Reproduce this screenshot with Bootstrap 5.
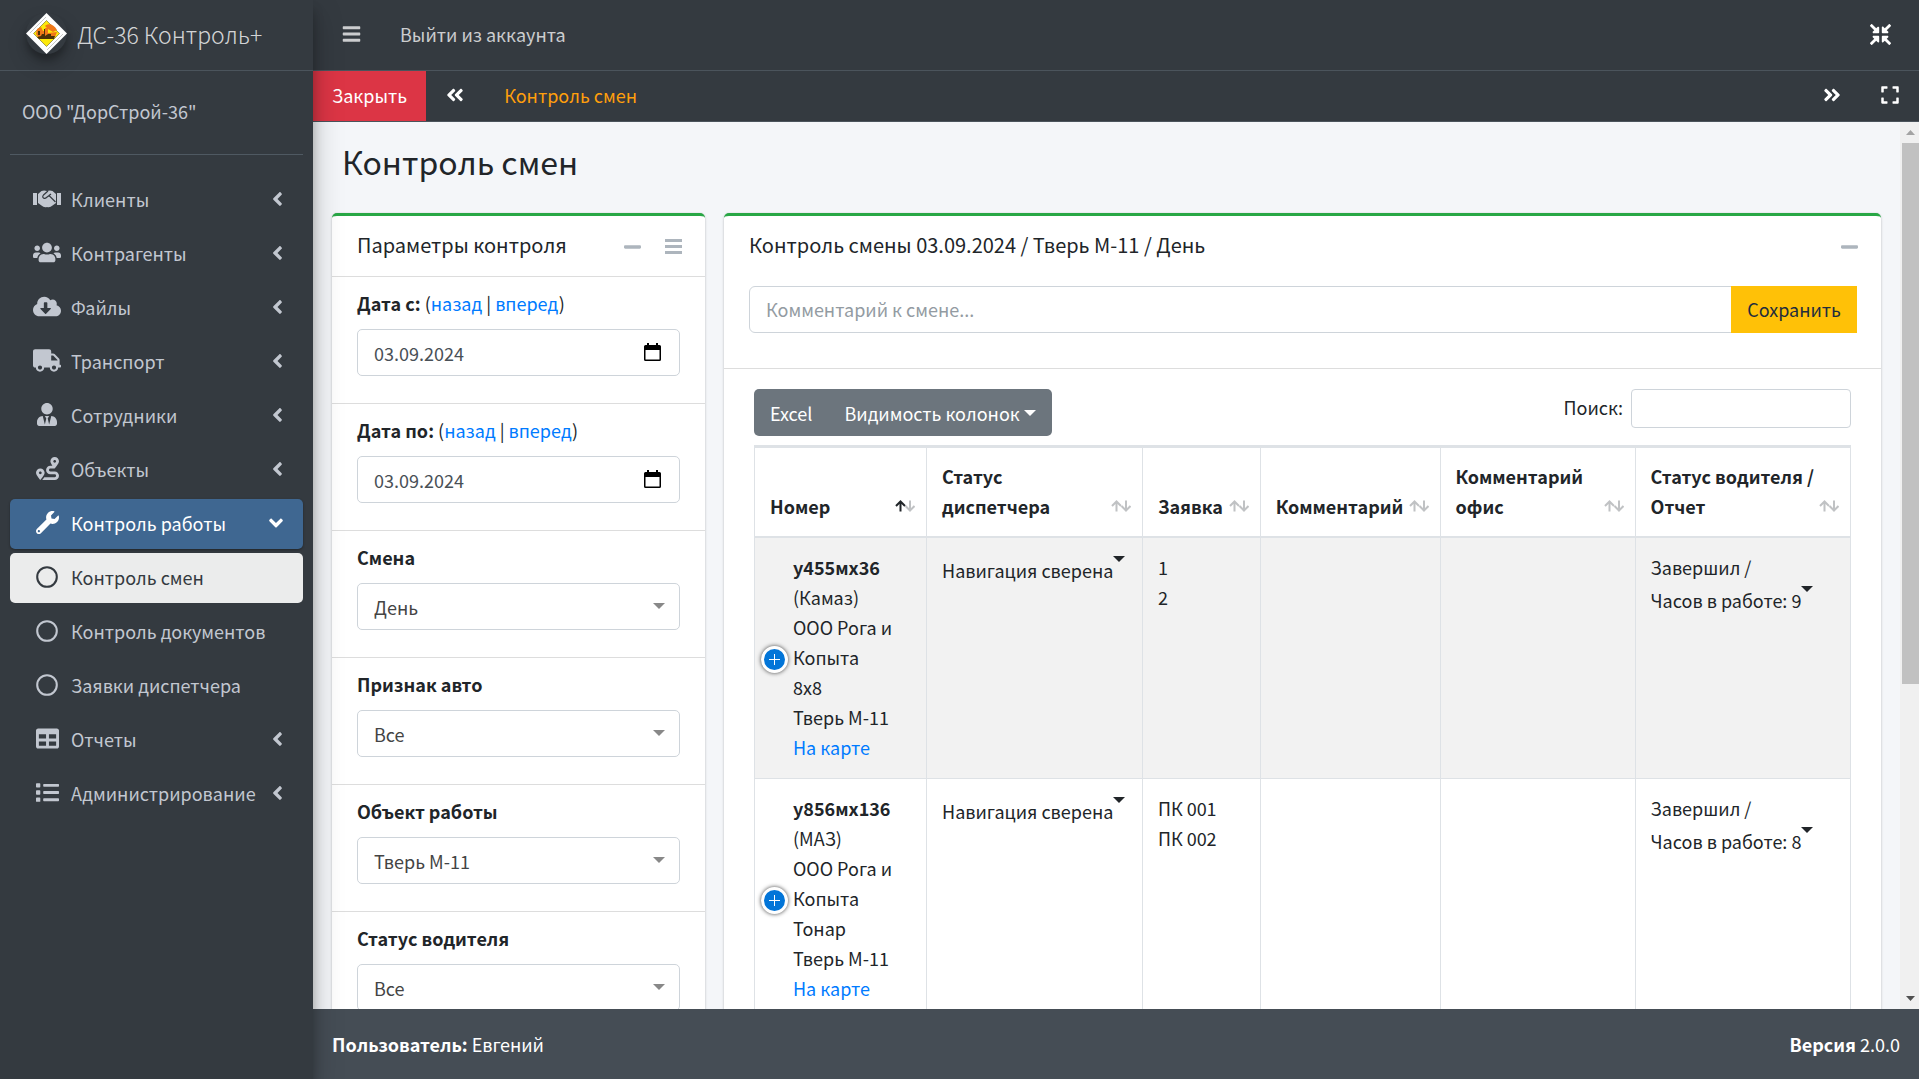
<!DOCTYPE html>
<html lang="ru">
<head>
<meta charset="utf-8">
<meta name="viewport" content="width=device-width, initial-scale=1">
<title>ДС-36 Контроль+</title>
<link rel="stylesheet" href="https://cdn.jsdelivr.net/npm/bootstrap@5.3.0/dist/css/bootstrap.min.css">
<script src="https://cdn.jsdelivr.net/npm/bootstrap@5.3.0/dist/js/bootstrap.bundle.min.js"></script>
<style>
  :root { --ink: #212529; --dark: #343a40; --line: #dee2e6; --side: #c2c7d0; }
  body { font-family: "Noto Sans CJK SC", "Noto Sans", sans-serif; font-size: 18px; line-height: 30px; color: var(--ink); background: #f4f6f9; }
  a { text-decoration: none; color: #007bff; }
  svg { fill: currentColor; display: block; flex: none; }
  .form-control, .form-select, .btn { font-size: 18px; line-height: 30px; }

  /* sidebar */
  .sidebar { width: 313px; background: var(--dark); color: var(--side); z-index: 5; box-shadow: 0 14px 28px rgba(0,0,0,.25), 0 10px 10px rgba(0,0,0,.22); }
  .brand { height: 71px; padding: 0 26px 3px; gap: 10px; border-bottom: 1px solid #4b545c; color: rgba(255,255,255,.8); font-size: 23px; font-weight: 300; }
  .brand-logo { border-radius: 50%; box-shadow: 0 10px 20px rgba(0,0,0,.19), 0 6px 6px rgba(0,0,0,.23); }
  .org { height: 84px; margin: 0 10px 20px; padding: 0 12px 3px; border-bottom: 1px solid #4f5962; }
  .org a { color: var(--side); }
  .side-nav { padding: 0 10px; gap: 4px; }
  .side-nav .nav-link { height: 50px; display: flex; align-items: center; padding: 0 20px; color: var(--side); border-radius: 5px; }
  .side-nav .nav-link > span { flex: 1; white-space: nowrap; margin-bottom: 2px; }
  .side-nav .ico { width: 34px; margin: 0 7px 3px 0; display: flex; justify-content: center; }
  .side-nav .arr { margin-bottom: 3px; }
  .side-nav .nav-link.opened { background: #3f6791; color: #fff; box-shadow: 0 1px 3px rgba(0,0,0,.12), 0 1px 2px rgba(0,0,0,.24); }
  .side-nav .nav-link.current { background: #ebecec; color: var(--dark); }

  /* top bars */
  .topbar { height: 71px; background: var(--dark); border-bottom: 1px solid #4b545c; padding: 0 28px 2px 29px; }
  .topbar a { color: rgba(255,255,255,.75); }
  .topbar .logout { margin-left: 39px; }
  .tabbar { height: 51px; background: var(--dark); border-bottom: 1px solid #4b545c; }
  .tabbar a { color: #fff; padding-bottom: 2px; }
  .tabbar .close-tab { background: #dc3545; padding: 0 19px 2px; }
  .tabbar .tab-title { color: #ff9f0c; }

  /* content */
  .pane { padding: 20px 19px 0; overflow: hidden; }
  .page-title { font-size: 32px; line-height: 38px; padding: 0 10px; margin-bottom: 33px; font-weight: 400; }
  .panels { gap: 19px; }
  .panel { background: #fff; border-top: 3px solid #28a745; border-radius: 5px; box-shadow: 0 0 1px rgba(0,0,0,.125), 0 1px 3px rgba(0,0,0,.2); }
  .panel-params { width: 373px; }
  .panel-title { font-size: 20px; line-height: 30px; font-weight: 400; margin: 0; padding-bottom: 2px; }
  .panel-head { height: 60px; padding: 0 23px 0 25px; }
  .tool { color: #adb5bd; border: 0; background: none; padding: 1px 0 0; }
  .param { border-top: 1px solid rgba(0,0,0,.135); padding: 11px 25px 27px; }
  .param .lbl { margin-bottom: 11px; }
  .param .form-control, .param .form-select { height: 47px; border-color: #ced4da; border-radius: 5px; color: #495057; padding: 0 16px; box-shadow: none; }
  .param .form-select { background: #fff; color: #444; appearance: none; }
  .field { position: relative; }
  .field svg { position: absolute; right: 19px; top: 14px; color: #000; pointer-events: none; }
  .field .caret-s { right: 15px; top: 20px; color: #888; }

  .comment-row { padding: 10px 24px 35px 25px; border-bottom: 1px solid rgba(0,0,0,.135); }
  .comment-row .form-control { height: 47px; border-color: #ced4da; padding: 0 16px 2px; }
  .comment-row .form-control::placeholder { color: #939ba2; }
  .comment-row .btn { background: #ffc107; color: #1f2d3d; border: 0; border-radius: 0; padding: 0 16px 2px; margin: 0; }
  .grid-area { padding: 20px 30px; }
  .grid-area .btn-group { background: #6c757d; border-radius: 5px; }
  .grid-area .btn-group .btn { color: #fff; border: 0; height: 47px; padding: 0 16px; }
  .grid-area .btn-group .btn + .btn { margin-left: 0; }
  .search-box { width: 220px; height: 39px; border-color: #ced4da; border-radius: 4px; }
  .shifts { border-collapse: separate; border-spacing: 0; border: 1px solid var(--line); border-width: 1px 0 0 1px; margin-top: 9px; width: 100%; table-layout: fixed; color: var(--ink); }
  .shifts th, .shifts td { border: 0 solid var(--line); border-width: 0 1px 1px 0; padding: 14px 15px 16px; vertical-align: top; }
  .shifts th { border-width: 2px 1px 2px 0; vertical-align: bottom; padding: 13px 11px 15px 15px; font-weight: 700; }
  .shifts th > div { display: flex; justify-content: space-between; align-items: flex-end; }
  .shifts th svg { margin-bottom: 9px; color: #c0c2c4; }
  .shifts tbody tr:nth-child(odd) td { background: #f2f2f2; }
  .shifts td:first-child { padding-left: 38px; position: relative; }
  .row-open { position: absolute; left: 6px; top: 50%; margin-top: -12px; width: 27px; height: 27px; border: 3px solid #fff; border-radius: 50%; background: #0275d8; color: #fff; padding: 0; display: flex; align-items: center; justify-content: center; box-shadow: 0 0 4px #444; }
  .status { display: flex; color: var(--ink); border: 0; background: none; padding: 3px 0 0; text-align: left; white-space: nowrap; }
  .status svg { margin-top: 1px; }

  .page-foot { height: 70px; background: #454d55; color: #fff; padding: 0 19px; }

  /* scroll strip */
  .strip { width: 19px; background: #f0f0f0; padding-left: 2px; }
  .strip-end { height: 21px; }
  .strip-thumb { background: #c1c1c1; height: 64%; }
</style>
</head>
<body>
<svg width="0" height="0" class="position-absolute" aria-hidden="true">
  <defs>
    <symbol id="i-bars" viewBox="0 0 448 512"><path d="M16 132h416c9 0 16-7 16-16V76c0-9-7-16-16-16H16C7 60 0 67 0 76v40c0 9 7 16 16 16zm0 160h416c9 0 16-7 16-16v-40c0-9-7-16-16-16H16c-9 0-16 7-16 16v40c0 9 7 16 16 16zm0 160h416c9 0 16-7 16-16v-40c0-9-7-16-16-16H16c-9 0-16 7-16 16v40c0 9 7 16 16 16z"/></symbol>
    <symbol id="i-left" viewBox="0 0 256 512"><path d="M31.700 239l136-136c9.400-9.400 24.600-9.400 33.900 0l22.600 22.600c9.400 9.400 9.400 24.600 0 33.900L127.900 256l96.400 96.400c9.400 9.400 9.400 24.600 0 33.900L201.700 409c-9.400 9.400-24.600 9.400-33.900 0l-136-136c-9.500-9.400-9.500-24.600-.1-34z"/></symbol>
    <symbol id="i-dleft" viewBox="0 0 448 512"><path d="M223.700 239l136-136c9.400-9.400 24.600-9.400 33.900 0l22.600 22.600c9.400 9.400 9.400 24.600 0 33.900L319.900 256l96.400 96.400c9.400 9.400 9.400 24.600 0 33.900L393.700 409c-9.400 9.400-24.600 9.400-33.900 0l-136-136c-9.500-9.400-9.500-24.600-.1-34zm-192 34l136 136c9.400 9.400 24.600 9.400 33.900 0l22.600-22.600c9.400-9.400 9.400-24.600 0-33.900L127.900 256l96.400-96.400c9.400-9.400 9.400-24.600 0-33.900L201.700 103c-9.400-9.400-24.600-9.400-33.900 0l-136 136c-9.500 9.400-9.500 24.600-.1 34z"/></symbol>
    <symbol id="i-dright" viewBox="0 0 448 512"><g transform="matrix(-1 0 0 1 448 0)"><use href="#i-dleft" width="448" height="512"/></g></symbol>
    <symbol id="i-minus" viewBox="0 0 448 512"><path d="M416 208H32c-17.670 0-32 14.330-32 32v32c0 17.670 14.330 32 32 32h384c17.670 0 32-14.330 32-32v-32c0-17.670-14.330-32-32-32z"/></symbol>
    <symbol id="i-expand" viewBox="0 0 448 512"><path d="M0 180V56c0-13.300 10.700-24 24-24h124c6.600 0 12 5.400 12 12v40c0 6.600-5.400 12-12 12H64v84c0 6.600-5.400 12-12 12H12c-6.600 0-12-5.400-12-12zM288 44v40c0 6.600 5.400 12 12 12h84v84c0 6.600 5.400 12 12 12h40c6.600 0 12-5.400 12-12V56c0-13.300-10.700-24-24-24H300c-6.600 0-12 5.400-12 12zm148 276h-40c-6.600 0-12 5.400-12 12v84h-84c-6.600 0-12 5.400-12 12v40c0 6.600 5.400 12 12 12h124c13.300 0 24-10.700 24-24V332c0-6.600-5.400-12-12-12zM160 468v-40c0-6.600-5.400-12-12-12H64v-84c0-6.600-5.400-12-12-12H12c-6.600 0-12 5.400-12 12v124c0 13.300 10.700 24 24 24h124c6.600 0 12-5.400 12-12z"/></symbol>
    <symbol id="i-compress" viewBox="0 0 512 512"><path d="M200 288H88c-21.400 0-32.100 25.800-17 41l32.900 31-99.200 99.300c-6.200 6.200-6.200 16.400 0 22.600l25.400 25.400c6.200 6.200 16.400 6.200 22.600 0L152 408l31.100 33c15.100 15.100 40.900 4.400 40.900-17V312c0-13.300-10.700-24-24-24zm112-64h112c21.400 0 32.100-25.900 17-41l-33-31 99.300-99.300c6.200-6.200 6.200-16.400 0-22.600L481.900 4.700c-6.200-6.200-16.400-6.200-22.600 0L360 104l-31.100-33C313.800 55.900 288 66.600 288 88v112c0 13.300 10.700 24 24 24zm96 136l33-31.100c15.100-15.100 4.400-40.900-17-40.900H312c-13.300 0-24 10.700-24 24v112c0 21.400 25.900 32.100 41 17l31-32.900 99.300 99.300c6.200 6.200 16.400 6.200 22.600 0l25.400-25.400c6.200-6.200 6.200-16.400 0-22.600L408 360zM183 71.100L152 104 52.700 4.700c-6.200-6.200-16.400-6.200-22.600 0L4.700 30.100c-6.200 6.200-6.200 16.400 0 22.600L104 152l-33 31.100C55.900 198.200 66.600 224 88 224h112c13.300 0 24-10.700 24-24V88c0-21.300-25.900-32-41-16.900z"/></symbol>
    <symbol id="i-ring" viewBox="0 0 512 512"><circle cx="256" cy="256" r="228" fill="none" stroke="currentColor" stroke-width="48"/></symbol>
    <symbol id="i-cal" viewBox="0 0 17 18"><path d="M3 0h2v2h7V0h2v2h1.500A1.500 1.500 0 0 1 17 3.500v13a1.500 1.500 0 0 1-1.500 1.500h-14A1.500 1.500 0 0 1 0 16.500v-13A1.500 1.500 0 0 1 1.500 2H3zM1.500 7v9.500h14V7z"/></symbol>
    <symbol id="i-caret" viewBox="0 0 12 6"><path d="M0 0h12L6 6z"/></symbol>
    <symbol id="i-sort" viewBox="0 0 20 12"><path d="M15 .5v10M10.500 6l4.500 4.500L19.500 6" fill="none" stroke="currentColor" stroke-width="2"/><path d="M5.500 11.500v-10M1 6l4.500-4.500L10 6" fill="none" stroke="var(--up, currentColor)" stroke-width="2"/></symbol>
  </defs>
</svg>

<div class="d-flex vh-100 overflow-hidden">
  <aside class="sidebar flex-shrink-0 position-relative">
    <a href="#" class="brand d-flex align-items-center">
      <svg class="brand-logo" width="41" height="41" viewBox="0 0 41 41">
        <path fill="#fff" d="M20.500 0L41 20.500 20.500 41 0 20.500z"/>
        <path fill="none" stroke="#b9b9b9" stroke-width=".8" d="M4 20L20 4M21 37l16-16"/>
        <path fill="#fce80a" stroke="#6b6420" stroke-width=".6" d="M20.500 7.500l13 13-13 13-13-13z"/>
        <path fill="#f07818" d="M19 13c3-3 9-2 12 4l-4 2-5-3zM10 21l1-5 4-2 2 4h2v-3h3v5l9-1-2 5H12z"/>
        <path fill="#4b3208" d="M11 24l4-1 1-2h3v2l3-2h3v2h4l-1 3H13zM12 18h2v4h-2zM18 16h1v5h-1z"/>
      </svg>
      <span>ДС-36 Контроль+</span>
    </a>
    <div class="org d-flex align-items-center"><a href="#">ООО "ДорСтрой-36"</a></div>
    <nav class="side-nav nav flex-column">
      <a class="nav-link" href="#"><i class="ico"><svg width="28" height="20" viewBox="0 0 28 20"><path d="M0 4h4v12H0zM24 4h4v12h-4z"/><path d="M5 5l3.500-3Q11 1 14 2q3-1 5.500 0L23 5v9l-3.500 2.500Q17 19 14 18q-3 1-5.500-1.500L5 14z"/><path fill="none" stroke="#343a40" stroke-width="1.200" d="M15 2l-4.500 4Q9 8 10.500 9q1.500 1 3-.5L16 6.500l6.500 6.500M16 6.500l2-1.500"/></svg></i><span>Клиенты</span><svg class="arr" width="11" height="22"><use href="#i-left"/></svg></a>
      <a class="nav-link" href="#"><i class="ico"><svg width="28" height="23" viewBox="0 0 640 512"><path d="M96 224c35.300 0 64-28.700 64-64s-28.700-64-64-64-64 28.700-64 64 28.700 64 64 64zm448 0c35.300 0 64-28.700 64-64s-28.700-64-64-64-64 28.700-64 64 28.700 64 64 64zm32 32h-64c-17.600 0-33.500 7.100-45.100 18.600 40.300 22.100 68.900 62 75.100 109.400h66c17.700 0 32-14.300 32-32v-32c0-35.300-28.700-64-64-64zm-256 0c61.900 0 112-50.100 112-112S381.900 32 320 32 208 82.100 208 144s50.100 112 112 112zm76.800 32h-8.300c-20.800 10-43.900 16-68.500 16s-47.600-6-68.500-16h-8.300C179.600 288 128 339.600 128 403.200V432c0 26.500 21.500 48 48 48h288c26.500 0 48-21.500 48-48v-28.800c0-63.600-51.600-115.200-115.200-115.200zm-223.700-13.400C161.500 263.100 145.600 256 128 256H64c-35.300 0-64 28.700-64 64v32c0 17.700 14.300 32 32 32h65.900c6.300-47.400 34.900-87.300 75.200-109.400z"/></svg></i><span>Контрагенты</span><svg class="arr" width="11" height="22"><use href="#i-left"/></svg></a>
      <a class="nav-link" href="#"><i class="ico"><svg width="28" height="23" viewBox="0 0 640 512"><path d="M537.600 226.600c4.100-10.700 6.400-22.400 6.400-34.600 0-53-43-96-96-96-19.700 0-38.100 6-53.300 16.200C367 64.200 315.300 32 256 32c-88.400 0-160 71.600-160 160 0 2.700.1 5.400.2 8.100C40.200 219.800 0 273.200 0 336c0 79.500 64.500 144 144 144h368c70.700 0 128-57.300 128-128 0-61.900-44-113.600-102.400-125.400zm-132.900 88.700L299.300 420.700c-6.200 6.200-16.400 6.200-22.600 0L171.300 315.300c-10.100-10.100-2.900-27.300 11.300-27.300H248V176c0-8.800 7.200-16 16-16h48c8.800 0 16 7.200 16 16v112h65.400c14.200 0 21.400 17.200 11.300 27.300z"/></svg></i><span>Файлы</span><svg class="arr" width="11" height="22"><use href="#i-left"/></svg></a>
      <a class="nav-link" href="#"><i class="ico"><svg width="28" height="23" viewBox="0 0 640 512"><path d="M624 352h-16V243.900c0-12.700-5.100-24.900-14.100-33.900L494 110.100c-9-9-21.200-14.100-33.900-14.100H416V48c0-26.500-21.500-48-48-48H48C21.500 0 0 21.500 0 48v320c0 26.500 21.500 48 48 48h16c0 53 43 96 96 96s96-43 96-96h128c0 53 43 96 96 96s96-43 96-96h48c8.800 0 16-7.200 16-16v-32c0-8.800-7.200-16-16-16zM160 464c-26.500 0-48-21.500-48-48s21.500-48 48-48 48 21.500 48 48-21.500 48-48 48zm320 0c-26.500 0-48-21.500-48-48s21.500-48 48-48 48 21.500 48 48-21.500 48-48 48zm80-208H416V144h44.100l99.900 99.900V256z"/></svg></i><span>Транспорт</span><svg class="arr" width="11" height="22"><use href="#i-left"/></svg></a>
      <a class="nav-link" href="#"><i class="ico"><svg width="20" height="23" viewBox="0 0 448 512"><path d="M224 256c70.700 0 128-57.300 128-128S294.700 0 224 0 96 57.300 96 128s57.300 128 128 128zm95.800 32.600L272 480l-32-136 32-56h-96l32 56-32 136-47.800-191.400C56.900 292 0 350.300 0 422.400V464c0 26.500 21.500 48 48 48h352c26.500 0 48-21.500 48-48v-41.600c0-72.100-56.900-130.400-128.200-133.800z"/></svg></i><span>Сотрудники</span><svg class="arr" width="11" height="22"><use href="#i-left"/></svg></a>
      <a class="nav-link" href="#"><i class="ico"><svg width="23" height="23" viewBox="0 0 512 512"><path d="M416 320h-96c-17.600 0-32-14.400-32-32s14.400-32 32-32h96s96-107 96-160-43-96-96-96-96 43-96 96c0 25.500 22.200 63.400 45.300 96H320c-52.900 0-96 43.100-96 96s43.100 96 96 96h96c17.600 0 32 14.400 32 32s-14.400 32-32 32H185.500c-16 24.800-33.800 47.700-47.300 64H416c52.900 0 96-43.100 96-96s-43.100-96-96-96zm0-256c17.700 0 32 14.300 32 32s-14.300 32-32 32-32-14.300-32-32 14.300-32 32-32zM96 256c-53 0-96 43-96 96s96 160 96 160 96-107 96-160-43-96-96-96zm0 128c-17.700 0-32-14.300-32-32s14.300-32 32-32 32 14.300 32 32-14.300 32-32 32z"/></svg></i><span>Объекты</span><svg class="arr" width="11" height="22"><use href="#i-left"/></svg></a>
      <a class="nav-link opened" href="#"><i class="ico"><svg width="23" height="23" viewBox="0 0 512 512"><path d="M507.730 109.100c-2.240-9.030-13.540-12.090-20.120-5.510l-74.360 74.360-67.880-11.310-11.310-67.880 74.360-74.360c6.620-6.620 3.430-17.900-5.660-20.160-47.380-11.740-99.550.91-136.580 37.930-39.640 39.640-50.550 97.100-34.050 147.200L18.740 402.760c-24.990 24.990-24.990 65.510 0 90.500 24.990 24.990 65.510 24.990 90.500 0l213.210-213.210c50.120 16.710 107.470 5.680 147.370-34.220 37.070-37.070 49.700-89.320 37.910-136.730zM64 472c-13.250 0-24-10.750-24-24 0-13.260 10.750-24 24-24s24 10.740 24 24c0 13.250-10.750 24-24 24z"/></svg></i><span>Контроль работы</span><svg class="arr" width="14" height="22" viewBox="0 0 320 512"><path d="M143 353L7 217c-9.400-9.400-9.400-24.600 0-33.900l22.600-22.600c9.400-9.400 24.600-9.400 33.900 0l96.400 96.400 96.400-96.400c9.400-9.400 24.600-9.400 33.900 0l22.600 22.600c9.400 9.400 9.400 24.600 0 33.900l-136 136c-9.200 9.400-24.400 9.400-33.800 0z"/></svg></a>
      <a class="nav-link current" href="#"><i class="ico"><svg width="22" height="22"><use href="#i-ring"/></svg></i><span>Контроль смен</span></a>
      <a class="nav-link" href="#"><i class="ico"><svg width="22" height="22"><use href="#i-ring"/></svg></i><span>Контроль документов</span></a>
      <a class="nav-link" href="#"><i class="ico"><svg width="22" height="22"><use href="#i-ring"/></svg></i><span>Заявки диспетчера</span></a>
      <a class="nav-link" href="#"><i class="ico"><svg width="23" height="23" viewBox="0 0 512 512"><path d="M464 32H48C21.490 32 0 53.490 0 80v352c0 26.510 21.490 48 48 48h416c26.510 0 48-21.490 48-48V80c0-26.510-21.490-48-48-48zM224 416H64v-96h160v96zm0-160H64v-96h160v96zm224 160H288v-96h160v96zm0-160H288v-96h160v96z"/></svg></i><span>Отчеты</span><svg class="arr" width="11" height="22"><use href="#i-left"/></svg></a>
      <a class="nav-link" href="#"><i class="ico"><svg width="23" height="23" viewBox="0 0 512 512"><path d="M80 368H16a16 16 0 0 0-16 16v64a16 16 0 0 0 16 16h64a16 16 0 0 0 16-16v-64a16 16 0 0 0-16-16zm0-320H16A16 16 0 0 0 0 64v64a16 16 0 0 0 16 16h64a16 16 0 0 0 16-16V64a16 16 0 0 0-16-16zm0 160H16a16 16 0 0 0-16 16v64a16 16 0 0 0 16 16h64a16 16 0 0 0 16-16v-64a16 16 0 0 0-16-16zm416 176H176a16 16 0 0 0-16 16v32a16 16 0 0 0 16 16h320a16 16 0 0 0 16-16v-32a16 16 0 0 0-16-16zm0-320H176a16 16 0 0 0-16 16v32a16 16 0 0 0 16 16h320a16 16 0 0 0 16-16V80a16 16 0 0 0-16-16zm0 160H176a16 16 0 0 0-16 16v32a16 16 0 0 0 16 16h320a16 16 0 0 0 16-16v-32a16 16 0 0 0-16-16z"/></svg></i><span>Администрирование</span><svg class="arr" width="11" height="22"><use href="#i-left"/></svg></a>
    </nav>
  </aside>

  <div class="d-flex flex-column flex-grow-1 overflow-hidden">
    <header class="topbar d-flex align-items-center flex-shrink-0">
      <a href="#" aria-label="Меню"><svg width="19" height="20"><use href="#i-bars"/></svg></a>
      <a href="#" class="logout">Выйти из аккаунта</a>
      <a href="#" class="ms-auto text-white" aria-label="Свернуть"><svg width="21" height="21"><use href="#i-compress"/></svg></a>
    </header>
    <div class="tabbar d-flex align-items-stretch flex-shrink-0">
      <a href="#" class="close-tab d-flex align-items-center">Закрыть</a>
      <a href="#" class="d-flex align-items-center px-3 mx-1" aria-label="Назад"><svg width="18" height="20"><use href="#i-dleft"/></svg></a>
      <a href="#" class="tab-title d-flex align-items-center px-3 ms-1">Контроль смен</a>
      <a href="#" class="d-flex align-items-center ms-auto px-3 me-2" aria-label="Вперед"><svg width="18" height="20"><use href="#i-dright"/></svg></a>
      <a href="#" class="d-flex align-items-center px-3 me-1" aria-label="Полный экран"><svg width="18" height="20"><use href="#i-expand"/></svg></a>
    </div>

    <div class="d-flex flex-grow-1 overflow-hidden">
      <main class="pane flex-grow-1">
        <h1 class="page-title">Контроль смен</h1>
        <div class="d-flex align-items-start panels">
          <section class="panel panel-params flex-shrink-0">
            <div class="panel-head d-flex align-items-center">
              <h2 class="panel-title flex-grow-1">Параметры контроля</h2>
              <button class="tool me-4" type="button" aria-label="Свернуть панель"><svg width="17" height="20"><use href="#i-minus"/></svg></button>
              <button class="tool" type="button" aria-label="Параметры"><svg width="17" height="15" viewBox="0 0 17 15"><path d="M0 0h17v3H0zM0 6h17v3H0zM0 12h17v3H0z"/></svg></button>
            </div>
            <div class="param">
              <div class="lbl"><label for="d1" class="fw-bold">Дата с:</label> (<a href="#">назад</a> | <a href="#">вперед</a>)</div>
              <div class="field"><input id="d1" class="form-control" type="text" value="03.09.2024"><svg width="17" height="18"><use href="#i-cal"/></svg></div>
            </div>
            <div class="param">
              <div class="lbl"><label for="d2" class="fw-bold">Дата по:</label> (<a href="#">назад</a> | <a href="#">вперед</a>)</div>
              <div class="field"><input id="d2" class="form-control" type="text" value="03.09.2024"><svg width="17" height="18"><use href="#i-cal"/></svg></div>
            </div>
            <div class="param">
              <div class="lbl"><label for="s1" class="fw-bold">Смена</label></div>
              <div class="field"><select id="s1" class="form-select"><option>День</option></select><svg class="caret-s" width="12" height="6"><use href="#i-caret"/></svg></div>
            </div>
            <div class="param">
              <div class="lbl"><label for="s2" class="fw-bold">Признак авто</label></div>
              <div class="field"><select id="s2" class="form-select"><option>Все</option></select><svg class="caret-s" width="12" height="6"><use href="#i-caret"/></svg></div>
            </div>
            <div class="param">
              <div class="lbl"><label for="s3" class="fw-bold">Объект работы</label></div>
              <div class="field"><select id="s3" class="form-select"><option>Тверь М-11</option></select><svg class="caret-s" width="12" height="6"><use href="#i-caret"/></svg></div>
            </div>
            <div class="param">
              <div class="lbl"><label for="s4" class="fw-bold">Статус водителя</label></div>
              <div class="field"><select id="s4" class="form-select"><option>Все</option></select><svg class="caret-s" width="12" height="6"><use href="#i-caret"/></svg></div>
            </div>
          </section>

          <section class="panel flex-grow-1">
            <div class="panel-head d-flex align-items-center">
              <h2 class="panel-title flex-grow-1">Контроль смены 03.09.2024 / Тверь М-11 / День</h2>
              <button class="tool" type="button" aria-label="Свернуть панель"><svg width="17" height="20"><use href="#i-minus"/></svg></button>
            </div>
            <div class="comment-row">
              <div class="input-group">
                <input class="form-control" type="text" placeholder="Комментарий к смене..." aria-label="Комментарий к смене">
                <button class="btn" type="button">Сохранить</button>
              </div>
            </div>
            <div class="grid-area">
              <div class="d-flex justify-content-between align-items-start">
                <div class="btn-group">
                  <button class="btn" type="button">Excel</button>
                  <button class="btn d-flex align-items-center gap-1" type="button">Видимость колонок <svg width="12" height="6"><use href="#i-caret"/></svg></button>
                </div>
                <div class="d-flex align-items-center gap-2">
                  <label for="q" class="pb-1">Поиск:</label>
                  <input id="q" class="form-control search-box" type="search">
                </div>
              </div>
              <table class="shifts">
                <colgroup><col style="width:15.700%"><col style="width:19.700%"><col style="width:10.750%"><col style="width:16.400%"><col style="width:17.800%"><col></colgroup>
                <thead>
                  <tr>
                    <th><div>Номер<svg width="20" height="12" style="--up:#212529"><use href="#i-sort"/></svg></div></th>
                    <th><div>Статус<br>диспетчера<svg width="20" height="12"><use href="#i-sort"/></svg></div></th>
                    <th><div>Заявка<svg width="20" height="12"><use href="#i-sort"/></svg></div></th>
                    <th><div>Комментарий<svg width="20" height="12"><use href="#i-sort"/></svg></div></th>
                    <th><div>Комментарий офис<svg width="20" height="12"><use href="#i-sort"/></svg></div></th>
                    <th><div>Статус водителя / Отчет<svg width="20" height="12"><use href="#i-sort"/></svg></div></th>
                  </tr>
                </thead>
                <tbody>
                  <tr>
                    <td><button class="row-open" type="button" aria-label="Подробнее"><svg width="11" height="11" viewBox="0 0 11 11"><path d="M5 0h1v5h5v1H6v5H5V6H0V5h5z"/></svg></button><b>у455мх36</b><br>(Камаз)<br>ООО Рога и<br>Копыта<br>8x8<br>Тверь М-11<br><a href="#">На карте</a></td>
                    <td><button class="status" type="button">Навигация сверена<svg width="12" height="6"><use href="#i-caret"/></svg></button></td>
                    <td>1<br>2</td><td></td><td></td>
                    <td>Завершил /<button class="status" type="button">Часов в работе: 9<svg width="12" height="6"><use href="#i-caret"/></svg></button></td>
                  </tr>
                  <tr>
                    <td><button class="row-open" type="button" aria-label="Подробнее"><svg width="11" height="11" viewBox="0 0 11 11"><path d="M5 0h1v5h5v1H6v5H5V6H0V5h5z"/></svg></button><b>у856мх136</b><br>(МАЗ)<br>ООО Рога и<br>Копыта<br>Тонар<br>Тверь М-11<br><a href="#">На карте</a></td>
                    <td><button class="status" type="button">Навигация сверена<svg width="12" height="6"><use href="#i-caret"/></svg></button></td>
                    <td>ПК 001<br>ПК 002</td><td></td><td></td>
                    <td>Завершил /<button class="status" type="button">Часов в работе: 8<svg width="12" height="6"><use href="#i-caret"/></svg></button></td>
                  </tr>
                </tbody>
              </table>
            </div>
          </section>
        </div>
      </main>
      <div class="strip d-flex flex-column flex-shrink-0" aria-hidden="true">
        <div class="strip-end d-flex align-items-center justify-content-center"><svg width="9" height="5" viewBox="0 0 9 5"><path fill="#a3a3a3" d="M0 5h9L4.500 0z"/></svg></div>
        <div class="flex-grow-1"><div class="strip-thumb"></div></div>
        <div class="strip-end d-flex align-items-center justify-content-center"><svg width="9" height="5" viewBox="0 0 9 5"><path fill="#505050" d="M0 0h9L4.500 5z"/></svg></div>
      </div>
    </div>

    <footer class="page-foot d-flex align-items-center justify-content-between flex-shrink-0">
      <div><b>Пользователь:</b> Евгений</div>
      <div><b>Версия</b> 2.0.0</div>
    </footer>
  </div>
</div>
</body>
</html>
